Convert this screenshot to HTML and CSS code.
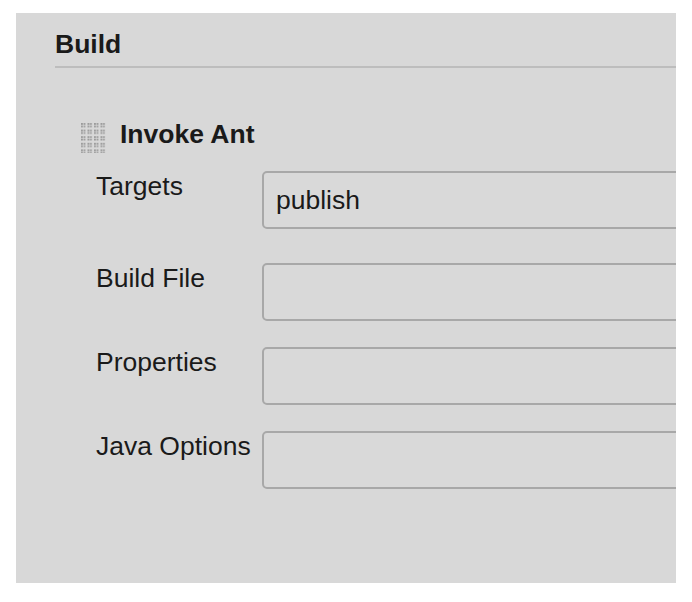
FILE: index.html
```html
<!DOCTYPE html>
<html>
<head>
<meta charset="utf-8">
<link rel="stylesheet" href="styles.css">
</head>
<body>
<div class="panel">
  <div class="section-head">
    <h2 class="section-title">Build</h2>
  </div>
  <div class="step">
    <div class="step-head">
      <svg class="grip" width="26" height="30" viewBox="0 0 26 30">
        <defs>
          <pattern id="g" x="0" y="0" width="6.5" height="6.6" patternUnits="userSpaceOnUse">
            <rect x="0" y="0" width="1.8" height="1.8" fill="#9a9a9a"/>
            <rect x="2.5" y="0" width="1.8" height="1.8" fill="#9a9a9a"/>
            <rect x="0" y="2.5" width="1.8" height="1.8" fill="#9a9a9a"/>
            <rect x="2.5" y="2.5" width="1.8" height="1.8" fill="#9a9a9a"/>
          </pattern>
        </defs>
        <rect x="0" y="0" width="26" height="33" fill="url(#g)"/>
      </svg>
      <span class="step-title">Invoke Ant</span>
    </div>
    <div class="fields">
      <div class="row first">
        <label class="lbl">Targets</label>
        <div class="input"><span class="val">publish</span></div>
      </div>
      <div class="row">
        <label class="lbl">Build File</label>
        <div class="input"></div>
      </div>
      <div class="row">
        <label class="lbl">Properties</label>
        <div class="input"></div>
      </div>
      <div class="row">
        <label class="lbl">Java Options</label>
        <div class="input"></div>
      </div>
    </div>
  </div>
</div>
</body>
</html>
```
FILE: styles.css
```css
html, body {
  margin: 0;
  padding: 0;
  background: #ffffff;
}
body {
  padding: 13px 16px 19px 16px;
  font-family: "Liberation Sans", Arial, sans-serif;
  color: #111111;
}
.panel {
  width: 660px;
  height: 570px;
  background: #d8d8d8;
  overflow: hidden;
  box-sizing: border-box;
  padding-left: 39px;
  padding-top: 16px;
}
.section-head {
  border-bottom: 2px solid #bdbdbd;
  height: 37px;
}
.section-title {
  margin: 0;
  font-size: 26.5px;
  font-weight: bold;
  line-height: 30px;
  color: #1a1a1a;
}
.step {
  padding-top: 51px;
  padding-left: 26px;
}
.step-head {
  display: flex;
  align-items: flex-start;
  gap: 13px;
}
.grip {
  display: block;
  margin-top: 4px;
}
.step-title {
  font-size: 26.5px;
  font-weight: bold;
  line-height: 30px;
  color: #1a1a1a;
}
.fields {
  display: flex;
  flex-direction: column;
  gap: 26px;
  padding-top: 18px;
  padding-left: 15px;
}
.row {
  display: flex;
  align-items: flex-start;
}
.row.first {
  margin-bottom: 8px;
}
.lbl {
  width: 166px;
  flex: none;
  font-size: 26.5px;
  line-height: 30px;
  padding-top: 0;
  color: #1a1a1a;
}
.input {
  flex: none;
  width: 460px;
  height: 58px;
  box-sizing: border-box;
  border: 2px solid #a8a8a8;
  border-radius: 5px;
  background: #d9d9d9;
  display: flex;
  align-items: center;
  padding-left: 12px;
  padding-top: 1px;
}
.val {
  font-size: 26.5px;
  color: #1a1a1a;
}
```
